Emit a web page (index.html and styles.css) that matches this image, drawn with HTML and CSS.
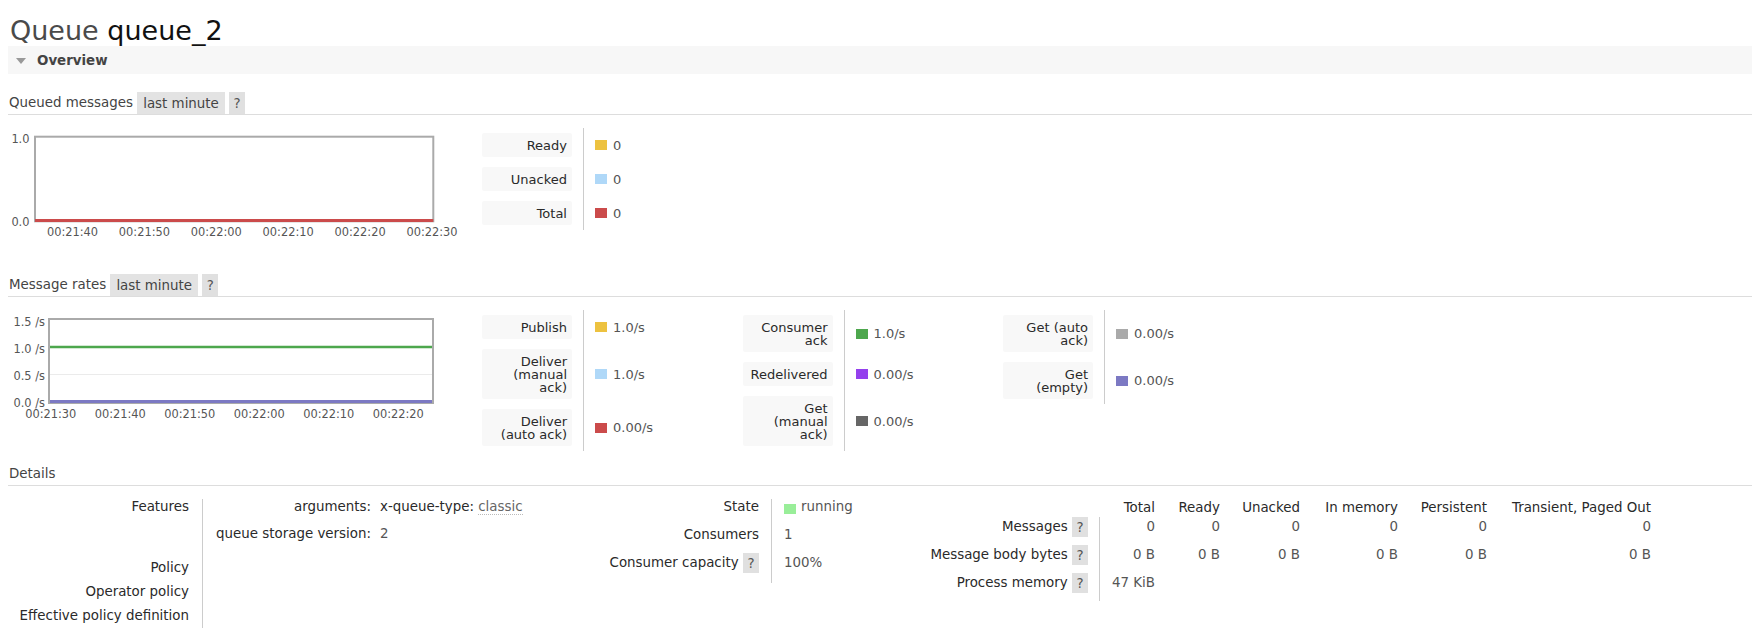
FILE: index.html
```html
<!DOCTYPE html>
<html>
<head>
<meta charset="utf-8">
<title>Queue queue_2</title>
<link rel="stylesheet" href="styles.css">
</head>
<body>
<h1 class="title">Queue <b>queue_2</b></h1>

<div class="section-bar"><span class="tri"></span><span class="bar-label">Overview</span></div>

<h3 class="subhead sec-queued">Queued messages <span class="opt">last minute</span> <span class="help">?</span></h3>
<div class="chart-row">
  <svg class="chart" width="474" height="118" viewBox="8 128 474 118" xmlns="http://www.w3.org/2000/svg">
    <g class="ticks">
      <text x="29.5" y="142.5" text-anchor="end">1.0</text>
      <text x="29.5" y="225.5" text-anchor="end">0.0</text>
      <text x="72.5" y="235.7" text-anchor="middle">00:21:40</text>
      <text x="144.4" y="235.7" text-anchor="middle">00:21:50</text>
      <text x="216.3" y="235.7" text-anchor="middle">00:22:00</text>
      <text x="288.2" y="235.7" text-anchor="middle">00:22:10</text>
      <text x="360.1" y="235.7" text-anchor="middle">00:22:20</text>
      <text x="432" y="235.7" text-anchor="middle">00:22:30</text>
    </g>
    <rect x="35" y="136.7" width="398.3" height="84.6" fill="#fff" stroke="#aaa" stroke-width="2"/>
    <line x1="35" y1="220.6" x2="433.3" y2="220.6" stroke="#cb4b4b" stroke-width="3"/>
  </svg>
  <div class="legend">
    <div class="lk"><span class="lbl">Ready</span></div>
    <div class="lv"><span class="key k-yellow"></span>0</div>
    <div class="lk"><span class="lbl">Unacked</span></div>
    <div class="lv"><span class="key k-blue"></span>0</div>
    <div class="lk"><span class="lbl">Total</span></div>
    <div class="lv"><span class="key k-red"></span>0</div>
  </div>
</div>

<h3 class="subhead sec-rates">Message rates <span class="opt">last minute</span> <span class="help">?</span></h3>
<div class="chart-row">
  <svg class="chart" width="474" height="118" viewBox="8 310 474 118" xmlns="http://www.w3.org/2000/svg">
    <g class="ticks">
      <text x="45" y="326" text-anchor="end">1.5 /s</text>
      <text x="45" y="352.5" text-anchor="end">1.0 /s</text>
      <text x="45" y="379.5" text-anchor="end">0.5 /s</text>
      <text x="45" y="406.5" text-anchor="end">0.0 /s</text>
      <text x="50.8" y="418" text-anchor="middle">00:21:30</text>
      <text x="120.3" y="418" text-anchor="middle">00:21:40</text>
      <text x="189.8" y="418" text-anchor="middle">00:21:50</text>
      <text x="259.3" y="418" text-anchor="middle">00:22:00</text>
      <text x="328.8" y="418" text-anchor="middle">00:22:10</text>
      <text x="398.3" y="418" text-anchor="middle">00:22:20</text>
    </g>
    <rect x="49" y="319" width="384" height="84" fill="#fff" stroke="#aaa" stroke-width="2"/>
    <line x1="50" y1="374.5" x2="432" y2="374.5" stroke="#ebebeb" stroke-width="1"/>
    <line x1="50" y1="347" x2="432" y2="347" stroke="#4da74d" stroke-width="2.5"/>
    <line x1="50" y1="401.5" x2="432" y2="401.5" stroke="#7c79c3" stroke-width="3"/>
  </svg>
  <div class="legend">
    <div class="lk"><span class="lbl">Publish</span></div>
    <div class="lv"><span class="key k-yellow"></span>1.0/s</div>
    <div class="lk"><span class="lbl">Deliver (manual ack)</span></div>
    <div class="lv"><span class="key k-blue"></span>1.0/s</div>
    <div class="lk"><span class="lbl">Deliver (auto ack)</span></div>
    <div class="lv"><span class="key k-red"></span>0.00/s</div>
  </div>
  <div class="legend">
    <div class="lk"><span class="lbl">Consumer ack</span></div>
    <div class="lv"><span class="key k-green"></span>1.0/s</div>
    <div class="lk"><span class="lbl">Redelivered</span></div>
    <div class="lv"><span class="key k-purple"></span>0.00/s</div>
    <div class="lk"><span class="lbl">Get (manual ack)</span></div>
    <div class="lv"><span class="key k-dark"></span>0.00/s</div>
  </div>
  <div class="legend">
    <div class="lk"><span class="lbl">Get (auto ack)</span></div>
    <div class="lv"><span class="key k-grey"></span>0.00/s</div>
    <div class="lk"><span class="lbl">Get (empty)</span></div>
    <div class="lv"><span class="key k-violet"></span>0.00/s</div>
  </div>
</div>

<h3 class="subhead sec-details">Details</h3>
<div class="details">
  <div class="facts f1">
    <div class="fk row-feat">Features</div>
    <div class="fv row-feat">
      <div class="args">
        <div class="ak">arguments:</div>
        <div class="av"><span class="ak2">x-queue-type:</span> <abbr class="cls">classic</abbr></div>
        <div class="ak">queue storage version:</div>
        <div class="av"><span class="val">2</span></div>
      </div>
    </div>
    <div class="fk row-pol">Policy</div><div class="fv row-pol"></div>
    <div class="fk row-pol">Operator policy</div><div class="fv row-pol"></div>
    <div class="fk row-pol">Effective policy definition</div><div class="fv row-pol"></div>
  </div>

  <div class="facts f2">
    <div class="fk">State</div>
    <div class="fv"><span class="key k-run"></span><span class="val">running</span></div>
    <div class="fk">Consumers</div>
    <div class="fv val">1</div>
    <div class="fk">Consumer capacity <span class="help">?</span></div>
    <div class="fv val">100%</div>
  </div>

  <div class="facts f3">
    <div class="th"></div>
    <div class="th">Total</div>
    <div class="th">Ready</div>
    <div class="th">Unacked</div>
    <div class="th">In memory</div>
    <div class="th">Persistent</div>
    <div class="th">Transient, Paged Out</div>

    <div class="rk">Messages <span class="help">?</span></div>
    <div class="rd first">0</div>
    <div class="rd">0</div>
    <div class="rd">0</div>
    <div class="rd">0</div>
    <div class="rd">0</div>
    <div class="rd">0</div>

    <div class="rk">Message body bytes <span class="help">?</span></div>
    <div class="rd first">0 B</div>
    <div class="rd">0 B</div>
    <div class="rd">0 B</div>
    <div class="rd">0 B</div>
    <div class="rd">0 B</div>
    <div class="rd">0 B</div>

    <div class="rk">Process memory <span class="help">?</span></div>
    <div class="rd first">47 KiB</div>
    <div class="rd"></div>
    <div class="rd"></div>
    <div class="rd"></div>
    <div class="rd"></div>
    <div class="rd"></div>
  </div>
</div>
</body>
</html>
```

FILE: styles.css
```css
html, body {
  background: #fff;
}
body {
  margin: 0;
  padding-left: 8px;
  font-family: "DejaVu Sans", Verdana, sans-serif;
  font-size: 13px;
  color: #333;
  overflow: hidden;
}

.title {
  margin: 16px 0 0 0;
  padding-left: 2px;
  font-size: 27px;
  line-height: 30px;
  font-weight: normal;
  color: #4a4a4a;
}
.title b {
  font-weight: normal;
  color: #111;
}

.section-bar {
  height: 28px;
  background: #f7f7f7;
  display: flex;
  align-items: center;
  padding-left: 8px;
}
.tri {
  width: 0;
  height: 0;
  border-left: 5px solid transparent;
  border-right: 5px solid transparent;
  border-top: 6px solid #999;
  margin-top: 2px;
}
.bar-label {
  margin-left: 11px;
  font-weight: bold;
  font-size: 13.4px;
  color: #444;
}

.subhead {
  margin: 0;
  height: 22px;
  line-height: 22px;
  font-size: 13.4px;
  font-weight: normal;
  color: #444;
  padding-left: 1px;
  border-bottom: 1px solid #ddd;
  white-space: nowrap;
}
.sec-queued { margin-top: 18px; }
.sec-rates { margin-top: 28px; }
.sec-details { margin-top: 12px; }

.opt {
  background: #e3e3e3;
  padding: 3.5px 6px;
  color: #444;
}
.help {
  background: #e0e0e0;
  padding: 2.5px 4.5px;
  color: #555;
}
.subhead .help {
  padding: 3.5px 4.5px;
}

.chart-row {
  display: flex;
  align-items: flex-start;
  padding-top: 13px;
}
.chart {
  display: block;
  flex: none;
}
.ticks text {
  font-family: "DejaVu Sans", Verdana, sans-serif;
  font-size: 11.4px;
  fill: #555;
}

.legend {
  display: grid;
  grid-template-columns: 101px auto;
  width: 260.5px;
  flex: none;
}
.lk {
  padding: 5px 11px 5px 0;
  display: flex;
  align-items: center;
}
.lbl {
  width: 90px;
  box-sizing: border-box;
  padding: 5.5px 5px 5.5px 6px;
  line-height: 13px;
  text-align: right;
  background: #f8f8f8;
  border-radius: 2px;
  color: #2a2a2a;
}
.lv {
  border-left: 1px solid #ccc;
  padding-left: 11px;
  display: flex;
  align-items: center;
  color: #555;
}
.key {
  display: inline-block;
  width: 12px;
  height: 10px;
  margin-right: 6px;
  flex: none;
}
.k-yellow { background: #edc240; }
.k-blue { background: #afd8f8; }
.k-red { background: #cb4b4b; }
.k-green { background: #4da74d; }
.k-purple { background: #9440ed; }
.k-dark { background: #666; }
.k-grey { background: #aaa; }
.k-violet { background: #7c79c3; }
.k-run { background: #99ee99; margin-right: 5px; }

.details {
  display: flex;
  align-items: flex-start;
  margin-top: 13px;
  font-size: 13.4px;
}
.facts {
  display: grid;
  flex: none;
  line-height: 16px;
}
.fk {
  text-align: right;
  white-space: nowrap;
  color: #2a2a2a;
}
.fv {
  border-left: 1px solid #ccc;
}
.val { color: #555; }

.f1 {
  width: 589px;
  grid-template-columns: 194px 1fr;
}
.f1 .fk { padding-right: 13px; }
.row-feat { height: 57px; }
.row-pol { height: 24px; line-height: 24px; }
.f1 .fv.row-feat { padding-left: 13px; }
.args {
  display: grid;
  grid-template-columns: 155px auto;
  column-gap: 9px;
  row-gap: 11px;
}
.ak { text-align: right; color: #2a2a2a; white-space: nowrap; }
.av { white-space: nowrap; color: #555; }
.ak2 { color: #2a2a2a; }
.cls {
  text-decoration: none;
  color: #666;
  border-bottom: 1px dotted #bbb;
}

.f2 {
  width: 321px;
  grid-template-columns: 174px auto;
  grid-auto-rows: 28px;
}
.f2 .fk { padding-right: 12px; }
.f2 .fv { padding-left: 12px; display: flex; align-items: flex-start; }
.f2 .fv .key { margin-top: 5px; }

.f3 {
  grid-template-columns: 181px 68px 65px 80px 98px 89px 164px;
  grid-template-rows: 19px 28px 28px 28px;
  margin-top: -1px;
}
.th {
  text-align: right;
  padding-right: 12px;
  line-height: 19px;
  white-space: nowrap;
  color: #2a2a2a;
}
.rk {
  text-align: right;
  padding-right: 11px;
  line-height: 20px;
  white-space: nowrap;
  color: #2a2a2a;
}
.rd {
  text-align: right;
  padding-right: 12px;
  line-height: 20px;
  white-space: nowrap;
  color: #555;
}
.rd.first { border-left: 1px solid #ccc; }
```
